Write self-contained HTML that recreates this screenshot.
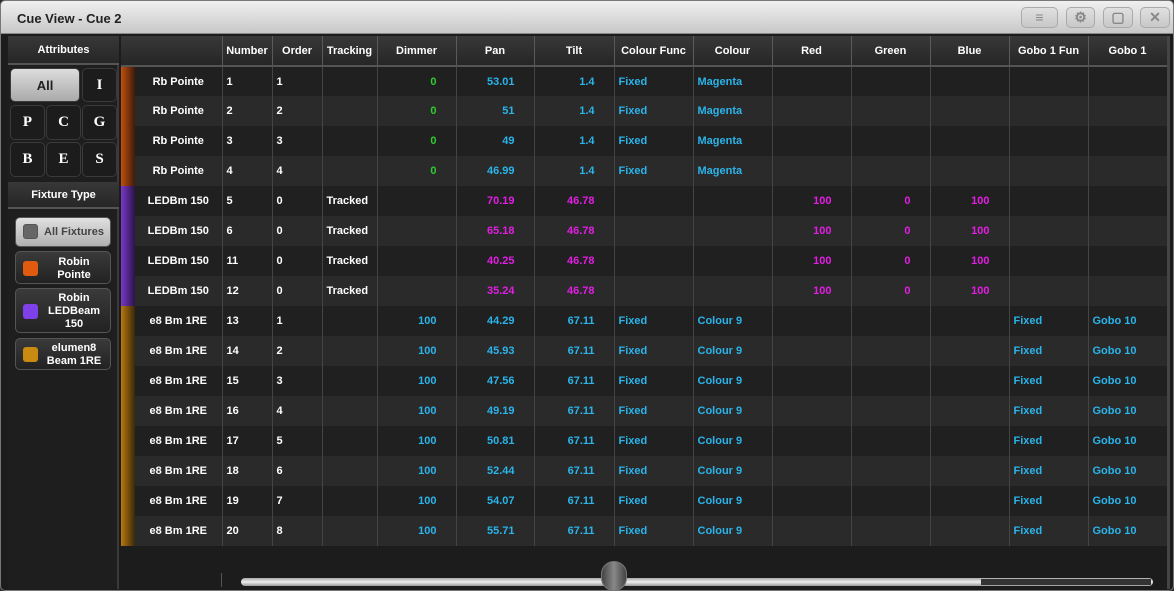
<!DOCTYPE html>
<html><head><meta charset="utf-8"><style>
*{margin:0;padding:0;box-sizing:border-box}
body{width:1174px;height:591px;background:#2a2a2a;font-family:"Liberation Sans",sans-serif;font-weight:bold;font-size:11px;color:#fff;overflow:hidden;position:relative}
.win{position:absolute;left:0;top:0;width:1174px;height:591px;border:1px solid #777;border-radius:5px;background:#1c1c1c;overflow:hidden}
.title{position:absolute;left:0;top:0;width:1172px;height:33px;background:linear-gradient(#f0f0f0,#c8c8c8);border-bottom:1px solid #888}
.title span{position:absolute;left:16px;top:10px;font-size:13px;color:#222}
.tb{position:absolute;top:6px;height:21px;border:1px solid #aaa;border-radius:5px;background:linear-gradient(#e0e0e0,#c8c8c8);color:#888;text-align:center;font-size:14px;line-height:19px}
.left{position:absolute;left:7px;top:35px;width:111px;height:553px;background:#1e1e1e;border-right:2px solid #3a3a3a}
.hdr{position:absolute;background:linear-gradient(#383838,#262626);text-align:center;color:#fff;border-bottom:2px solid #555}
.btn{position:absolute;border:1px solid #3a3a3a;border-radius:5px;background:#1c1c1c;font-family:"Liberation Serif",serif;font-size:15px;text-align:center;line-height:33px}
.fb{position:absolute;left:14px;width:96px;border:1px solid #555;border-radius:5px;background:linear-gradient(#3a3a3a,#222);font-size:11px;text-align:center;line-height:13px}
.sw{position:absolute;left:7px;width:15px;height:15px;border-radius:3px}
table{position:absolute;left:120px;top:35px;border-collapse:collapse;table-layout:fixed;width:1046px}
th{height:30px;background:linear-gradient(#383838,#262626);border-right:1px solid #5a5a5a;border-bottom:2px solid #555;font-weight:bold;text-align:center;padding:0;font-size:11px}
td{height:30px;border-right:1px solid #444;padding:0 4px;white-space:nowrap;overflow:hidden}
tbody tr:nth-child(even) td{background:#2a2a2a}
tbody tr:nth-child(odd) td{background:#202020}
td.bar{padding:0;border-right:none}
td.nm{text-align:center}
.r{text-align:right;padding-right:19px}
.g{color:#2ecc2e}.c{color:#2ab4ea}.m{color:#e21ee2}
</style></head><body><div class="win">
<div class="title"><span>Cue View - Cue 2</span>
<div class="tb" style="left:1020px;width:37px">&#8801;</div><div class="tb" style="left:1065px;width:29px">&#9881;</div><div class="tb" style="left:1102px;width:30px">&#9634;</div><div class="tb" style="left:1139px;width:30px">&#10005;</div></div>
<div class="left">
<div class="hdr" style="left:0;top:0;width:111px;height:29px;line-height:28px">Attributes</div>
<div class="btn" style="left:2px;top:32px;width:70px;height:34px;background:linear-gradient(#ddd,#aaa);color:#222;font-family:'Liberation Sans';font-size:13px">All</div>
<div class="btn" style="left:74px;top:32px;width:35px;height:34px">I</div>
<div class="btn" style="left:2px;top:69px;width:35px;height:35px">P</div>
<div class="btn" style="left:38px;top:69px;width:35px;height:35px">C</div>
<div class="btn" style="left:74px;top:69px;width:35px;height:35px">G</div>
<div class="btn" style="left:2px;top:106px;width:35px;height:35px">B</div>
<div class="btn" style="left:38px;top:106px;width:35px;height:35px">E</div>
<div class="btn" style="left:74px;top:106px;width:35px;height:35px">S</div>
<div class="hdr" style="left:0;top:146px;width:111px;height:27px;line-height:26px">Fixture Type</div>
</div>
<div class="fb" style="top:216px;height:30px;background:linear-gradient(#e0e0e0,#b0b0b0);color:#444;line-height:28px;padding-left:22px">All Fixtures<div class="sw" style="top:6px;background:#666;border:1px solid #555"></div></div>
<div class="fb" style="top:250px;height:33px;padding:4px 0 0 22px">Robin<br>Pointe<div class="sw" style="top:9px;background:#e05a10"></div></div>
<div class="fb" style="top:287px;height:45px;padding:3px 0 0 22px">Robin<br>LEDBeam<br>150<div class="sw" style="top:15px;background:#8040e8"></div></div>
<div class="fb" style="top:337px;height:32px;padding:3px 0 0 22px">elumen8<br>Beam 1RE<div class="sw" style="top:8px;background:#c88a10"></div></div>
<table>
<colgroup><col style="width:14px"><col style="width:87px"><col style="width:50px"><col style="width:50px"><col style="width:55px"><col style="width:79px"><col style="width:78px"><col style="width:80px"><col style="width:79px"><col style="width:79px"><col style="width:79px"><col style="width:79px"><col style="width:79px"><col style="width:79px"><col style="width:79px"></colgroup>
<thead><tr><th colspan="2"></th><th>Number</th><th>Order</th><th>Tracking</th><th>Dimmer</th><th>Pan</th><th>Tilt</th><th>Colour Func</th><th>Colour</th><th>Red</th><th>Green</th><th>Blue</th><th>Gobo 1 Fun</th><th>Gobo 1</th></tr></thead>
<tbody>
<tr><td class="bar" style="background:linear-gradient(90deg,#c05010,#401a08)"></td><td class="nm">Rb Pointe</td><td>1</td><td>1</td><td></td><td class="r g">0</td><td class="r c">53.01</td><td class="r c">1.4</td><td class="c">Fixed</td><td class="c">Magenta</td><td></td><td></td><td></td><td></td><td></td></tr>
<tr><td class="bar" style="background:linear-gradient(90deg,#c05010,#401a08)"></td><td class="nm">Rb Pointe</td><td>2</td><td>2</td><td></td><td class="r g">0</td><td class="r c">51</td><td class="r c">1.4</td><td class="c">Fixed</td><td class="c">Magenta</td><td></td><td></td><td></td><td></td><td></td></tr>
<tr><td class="bar" style="background:linear-gradient(90deg,#c05010,#401a08)"></td><td class="nm">Rb Pointe</td><td>3</td><td>3</td><td></td><td class="r g">0</td><td class="r c">49</td><td class="r c">1.4</td><td class="c">Fixed</td><td class="c">Magenta</td><td></td><td></td><td></td><td></td><td></td></tr>
<tr><td class="bar" style="background:linear-gradient(90deg,#c05010,#401a08)"></td><td class="nm">Rb Pointe</td><td>4</td><td>4</td><td></td><td class="r g">0</td><td class="r c">46.99</td><td class="r c">1.4</td><td class="c">Fixed</td><td class="c">Magenta</td><td></td><td></td><td></td><td></td><td></td></tr>
<tr><td class="bar" style="background:linear-gradient(90deg,#7a38c8,#2a1448)"></td><td class="nm">LEDBm 150</td><td>5</td><td>0</td><td>Tracked</td><td></td><td class="r m">70.19</td><td class="r m">46.78</td><td></td><td></td><td class="r m">100</td><td class="r m">0</td><td class="r m">100</td><td></td><td></td></tr>
<tr><td class="bar" style="background:linear-gradient(90deg,#7a38c8,#2a1448)"></td><td class="nm">LEDBm 150</td><td>6</td><td>0</td><td>Tracked</td><td></td><td class="r m">65.18</td><td class="r m">46.78</td><td></td><td></td><td class="r m">100</td><td class="r m">0</td><td class="r m">100</td><td></td><td></td></tr>
<tr><td class="bar" style="background:linear-gradient(90deg,#7a38c8,#2a1448)"></td><td class="nm">LEDBm 150</td><td>11</td><td>0</td><td>Tracked</td><td></td><td class="r m">40.25</td><td class="r m">46.78</td><td></td><td></td><td class="r m">100</td><td class="r m">0</td><td class="r m">100</td><td></td><td></td></tr>
<tr><td class="bar" style="background:linear-gradient(90deg,#7a38c8,#2a1448)"></td><td class="nm">LEDBm 150</td><td>12</td><td>0</td><td>Tracked</td><td></td><td class="r m">35.24</td><td class="r m">46.78</td><td></td><td></td><td class="r m">100</td><td class="r m">0</td><td class="r m">100</td><td></td><td></td></tr>
<tr><td class="bar" style="background:linear-gradient(90deg,#b87810,#3a2808)"></td><td class="nm">e8 Bm 1RE</td><td>13</td><td>1</td><td></td><td class="r c">100</td><td class="r c">44.29</td><td class="r c">67.11</td><td class="c">Fixed</td><td class="c">Colour 9</td><td></td><td></td><td></td><td class="c">Fixed</td><td class="c">Gobo 10</td></tr>
<tr><td class="bar" style="background:linear-gradient(90deg,#b87810,#3a2808)"></td><td class="nm">e8 Bm 1RE</td><td>14</td><td>2</td><td></td><td class="r c">100</td><td class="r c">45.93</td><td class="r c">67.11</td><td class="c">Fixed</td><td class="c">Colour 9</td><td></td><td></td><td></td><td class="c">Fixed</td><td class="c">Gobo 10</td></tr>
<tr><td class="bar" style="background:linear-gradient(90deg,#b87810,#3a2808)"></td><td class="nm">e8 Bm 1RE</td><td>15</td><td>3</td><td></td><td class="r c">100</td><td class="r c">47.56</td><td class="r c">67.11</td><td class="c">Fixed</td><td class="c">Colour 9</td><td></td><td></td><td></td><td class="c">Fixed</td><td class="c">Gobo 10</td></tr>
<tr><td class="bar" style="background:linear-gradient(90deg,#b87810,#3a2808)"></td><td class="nm">e8 Bm 1RE</td><td>16</td><td>4</td><td></td><td class="r c">100</td><td class="r c">49.19</td><td class="r c">67.11</td><td class="c">Fixed</td><td class="c">Colour 9</td><td></td><td></td><td></td><td class="c">Fixed</td><td class="c">Gobo 10</td></tr>
<tr><td class="bar" style="background:linear-gradient(90deg,#b87810,#3a2808)"></td><td class="nm">e8 Bm 1RE</td><td>17</td><td>5</td><td></td><td class="r c">100</td><td class="r c">50.81</td><td class="r c">67.11</td><td class="c">Fixed</td><td class="c">Colour 9</td><td></td><td></td><td></td><td class="c">Fixed</td><td class="c">Gobo 10</td></tr>
<tr><td class="bar" style="background:linear-gradient(90deg,#b87810,#3a2808)"></td><td class="nm">e8 Bm 1RE</td><td>18</td><td>6</td><td></td><td class="r c">100</td><td class="r c">52.44</td><td class="r c">67.11</td><td class="c">Fixed</td><td class="c">Colour 9</td><td></td><td></td><td></td><td class="c">Fixed</td><td class="c">Gobo 10</td></tr>
<tr><td class="bar" style="background:linear-gradient(90deg,#b87810,#3a2808)"></td><td class="nm">e8 Bm 1RE</td><td>19</td><td>7</td><td></td><td class="r c">100</td><td class="r c">54.07</td><td class="r c">67.11</td><td class="c">Fixed</td><td class="c">Colour 9</td><td></td><td></td><td></td><td class="c">Fixed</td><td class="c">Gobo 10</td></tr>
<tr><td class="bar" style="background:linear-gradient(90deg,#b87810,#3a2808)"></td><td class="nm">e8 Bm 1RE</td><td>20</td><td>8</td><td></td><td class="r c">100</td><td class="r c">55.71</td><td class="r c">67.11</td><td class="c">Fixed</td><td class="c">Colour 9</td><td></td><td></td><td></td><td class="c">Fixed</td><td class="c">Gobo 10</td></tr>
</tbody></table>
<div style="position:absolute;left:1166px;top:35px;width:3px;height:553px;background:#444"></div>
<div style="position:absolute;left:220px;top:572px;width:1px;height:14px;background:#555"></div>
<div style="position:absolute;left:240px;top:577px;width:912px;height:8px;border-radius:4px;background:linear-gradient(#aaa,#eee,#999)"></div>
<div style="position:absolute;left:980px;top:578px;width:170px;height:6px;background:#333"></div>
<div style="position:absolute;left:600px;top:560px;width:26px;height:30px;border-radius:13px;background:linear-gradient(90deg,#444,#888,#444);border:1px solid #777"></div>
</div></body></html>
